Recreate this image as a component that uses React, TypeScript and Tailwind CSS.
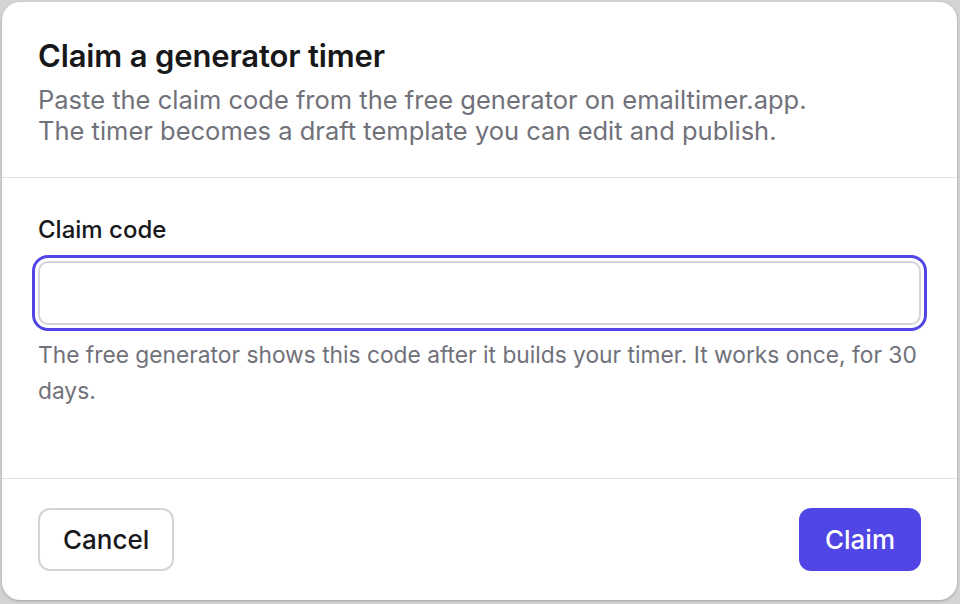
export default function App() {
  return (
    <div className="h-[604px] w-[960px] bg-[#d4d4d4] pl-[2px] pt-[2px] pr-[3px] pb-[4px] font-['Inter',sans-serif]">
      <div className="flex h-full w-full flex-col rounded-[18px] bg-white shadow-[0_1px_3px_rgba(0,0,0,0.25)]">
        <div className="border-b border-[#e4e4e7] px-[36px] pt-[36px] pb-[31px]">
          <h2 className="text-[31px] leading-[36px] font-semibold tracking-[-0.15px] text-[#18181b]">
            Claim a generator timer
          </h2>
          <p className="mt-[10px] text-[25.5px] leading-[31px] text-[#71717a]">
            Paste the claim code from the free generator on emailtimer.app.
            <br />
            The timer becomes a draft template you can edit and publish.
          </p>
        </div>

        <div className="flex-1 border-b border-[#e4e4e7] px-[36px] pt-[37px]">
          <label className="block text-[24px] leading-[30px] font-medium text-[#18181b]">
            Claim code
          </label>
          <input
            type="text"
            className="mt-[16px] block h-[64px] w-full rounded-[10px] border-2 border-[#d4d4d8] bg-white px-4 text-[22px] outline-[3px] outline-offset-[3px] outline-[#4f46e5] outline-solid"
          />
          <p className="mt-[12px] text-[22.75px] leading-[36px] text-[#71717a]">
            The free generator shows this code after it builds your timer. It
            works once, for 30 days.
          </p>
        </div>

        <div className="flex items-center justify-between px-[36px] py-[29px]">
          <button className="h-[63px] rounded-[12px] border-2 border-[#d4d4d8] bg-white px-[23px] text-[26px] font-medium text-[#18181b]">
            Cancel
          </button>
          <button className="h-[63px] rounded-[12px] bg-[#4f46e5] px-[26px] text-[26px] font-medium text-white">
            Claim
          </button>
        </div>
      </div>
    </div>
  );
}
